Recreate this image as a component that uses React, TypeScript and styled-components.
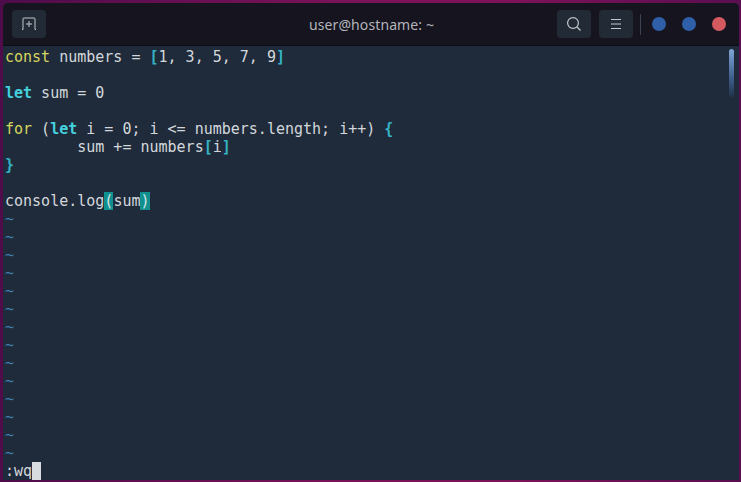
import React from "react";
import styled, { createGlobalStyle } from "styled-components";

const GlobalStyle = createGlobalStyle`
  html, body {
    margin: 0;
    width: 741px;
    height: 482px;
    overflow: hidden;
    background: #4a0d48;
  }
`;

const Desktop = styled.div`
  width: 741px;
  height: 482px;
  padding: 3px 2px 2px 3px;
  box-sizing: border-box;
  background: linear-gradient(90deg, #4e0c4a 0%, #7a1258 45%, #7c1258 70%, #5a0e50 100%);
`;

const Window = styled.div`
  width: 100%;
  height: 100%;
  display: flex;
  flex-direction: column;
  border-radius: 5px 5px 0 0;
  overflow: hidden;
  background: #1f2b3a;
`;

const TitleBar = styled.header`
  height: 43px;
  flex: none;
  display: grid;
  grid-template-columns: 1fr auto 1fr;
  align-items: center;
  padding: 0 13px 0 9px;
  box-sizing: border-box;
  background: #15141f;
  border-bottom: 1px solid #0c0c14;
`;

const LeftGroup = styled.div`
  display: flex;
  align-items: center;
`;

const RightGroup = styled.div`
  display: flex;
  align-items: center;
  justify-content: flex-end;
`;

const Title = styled.div`
  color: #b3b4ba;
  font: 14px "Noto Sans", sans-serif;
  letter-spacing: 0.1px;
  padding-left: 5px;
`;

const ToolButton = styled.button<{ $gap?: number }>`
  width: 34px;
  height: 28px;
  padding: 0;
  border: none;
  border-radius: 4px;
  background: #222a35;
  color: #c4c7cc;
  display: flex;
  align-items: center;
  justify-content: center;
  margin-right: ${({ $gap }) => $gap ?? 0}px;
`;

const Divider = styled.div`
  width: 1px;
  height: 21px;
  background: #3d4350;
  margin: 0 11px 0 7px;
`;

const Dot = styled.span<{ $color: string; $last?: boolean }>`
  width: 14px;
  height: 14px;
  border-radius: 50%;
  background: ${({ $color }) => $color};
  margin-right: ${({ $last }) => ($last ? 0 : 16)}px;
`;

const Body = styled.main`
  flex: 1;
  display: flex;
  min-height: 0;
`;

const Editor = styled.div`
  flex: 1;
  padding: 2px 0 0 2px;
  font: 15px/18px "DejaVu Sans Mono", monospace;
  color: #d3d7dc;
  white-space: pre;
`;

const Line = styled.div`
  height: 18px;
`;

const Keyword = styled.span`
  color: #d7d65f;
`;

const Statement = styled.span`
  color: #45d0de;
  font-weight: bold;
`;

const Bracket = styled.span`
  color: #34b3c4;
  font-weight: bold;
`;

const Match = styled.span`
  background: #10908f;
  color: #d3e4e6;
`;

const Tilde = styled.div`
  height: 18px;
  color: #3f7fb0;
`;

const Cursor = styled.span`
  display: inline-block;
  width: 9px;
  height: 18px;
  vertical-align: top;
  background: #d9dcdf;
`;

const ScrollTrack = styled.div`
  width: 12px;
  flex: none;
  padding: 3px 5px 0 2px;
  box-sizing: border-box;
`;

const ScrollThumb = styled.div`
  width: 5px;
  height: 48px;
  border-radius: 3px;
  background: linear-gradient(180deg, #7fa6d6 0%, #3e5f8c 60%, #22324a 100%);
`;

const App = () => (
  <>
    <GlobalStyle />
    <Desktop>
      <Window>
        <TitleBar>
          <LeftGroup>
            <ToolButton>
              <svg width="16" height="14" viewBox="0 0 16 14" fill="none" stroke="currentColor" strokeWidth="1">
                <path d="M1 12.5h1V2a1 1 0 0 1 1-1h10a1 1 0 0 1 1 1v10.5h1" />
                <path d="M8 4v6M5 7h6" />
              </svg>
            </ToolButton>
          </LeftGroup>
          <Title>user@hostname: ~</Title>
          <RightGroup>
            <ToolButton $gap={8}>
              <svg width="16" height="16" viewBox="0 0 16 16" fill="none" stroke="currentColor" strokeWidth="1.2">
                <circle cx="7" cy="7" r="5.4" />
                <path d="M11 11l3.5 3.5" />
              </svg>
            </ToolButton>
            <ToolButton>
              <svg width="12" height="12" viewBox="0 0 12 12" fill="none" stroke="currentColor" strokeWidth="1">
                <path d="M1 1.5h10M1 6h10M1 10.5h10" />
              </svg>
            </ToolButton>
            <Divider />
            <Dot $color="#2f5fa8" />
            <Dot $color="#2f5fa8" />
            <Dot $color="#d45a5f" $last />
          </RightGroup>
        </TitleBar>
        <Body>
          <Editor>
            <Line>
              <Keyword>const</Keyword> numbers = <Bracket>[</Bracket>1, 3, 5, 7, 9<Bracket>]</Bracket>
            </Line>
            <Line />
            <Line>
              <Statement>let</Statement> sum = 0
            </Line>
            <Line />
            <Line>
              <Keyword>for</Keyword> (<Statement>let</Statement> i = 0; i {"<="} numbers.length; i++) <Bracket>{"{"}</Bracket>
            </Line>
            <Line>
              {"        "}sum += numbers<Bracket>[</Bracket>i<Bracket>]</Bracket>
            </Line>
            <Line>
              <Bracket>{"}"}</Bracket>
            </Line>
            <Line />
            <Line>
              console.log<Match>(</Match>sum<Match>)</Match>
            </Line>
            {Array.from({ length: 14 }, (_, i) => (
              <Tilde key={i}>~</Tilde>
            ))}
            <Line>
              :wq<Cursor />
            </Line>
          </Editor>
          <ScrollTrack>
            <ScrollThumb />
          </ScrollTrack>
        </Body>
      </Window>
    </Desktop>
  </>
);

export default App;
